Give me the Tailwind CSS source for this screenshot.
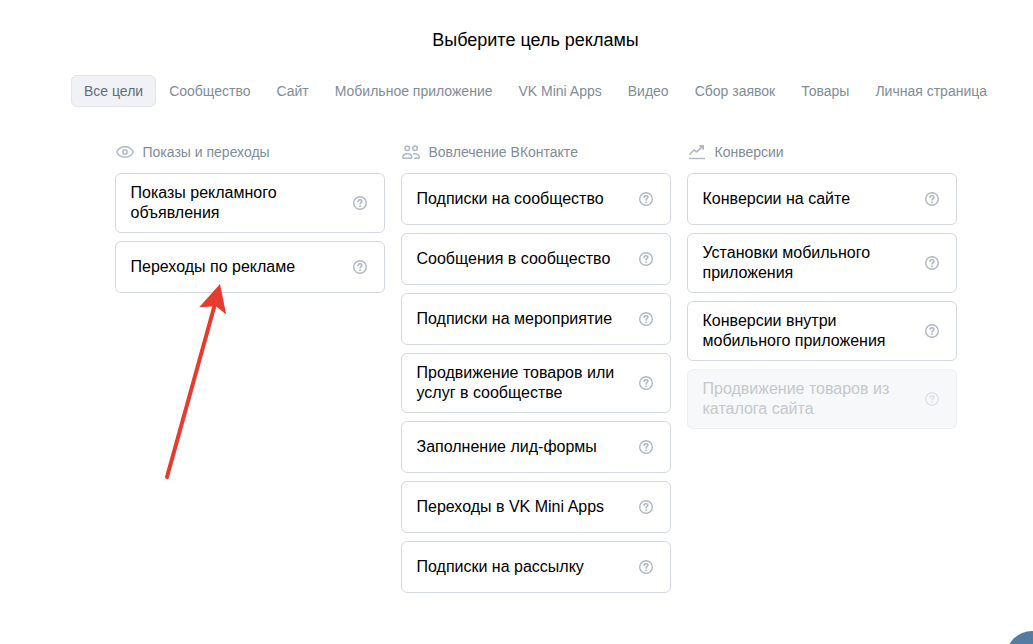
<!DOCTYPE html>
<html lang="ru">
<head>
  <meta charset="UTF-8" />
  <meta name="viewport" content="width=device-width, initial-scale=1" />
  <title>Выберите цель рекламы</title>
  <script src="https://cdn.jsdelivr.net/npm/@tailwindcss/browser@4"></script>
  <style>
    body {
      font-family: 'Liberation Sans', Arial, sans-serif;
    }
  </style>
</head>
<body class="bg-white text-black">
  <svg class="hidden" aria-hidden="true">
    <symbol id="help" viewBox="0 0 14 14">
      <circle cx="7" cy="7" r="6.3" fill="none" stroke="currentColor" stroke-width="1.4" />
      <path d="M5.1 5.5c0-1.1.8-1.8 1.9-1.8s1.9.7 1.9 1.6c0 1.3-1.8 1.3-1.8 2.7" fill="none" stroke="currentColor" stroke-width="1.5" stroke-linecap="round" />
      <circle cx="7.1" cy="10.2" r=".9" fill="currentColor" />
    </symbol>
  </svg>

  <main class="relative pl-[38px] pt-7 pb-12">
    <h1 class="text-center text-lg leading-6">Выберите цель рекламы</h1>

    <!-- Tabs -->
    <nav class="mt-[23px] flex justify-center text-sm whitespace-nowrap text-[#818c99]">
      <button class="h-8 px-3 rounded-md border border-[#e3e5e9] bg-[#f0f2f5] text-[#626d7a]">Все цели</button>
      <button class="h-8 px-3 border border-transparent">Сообщество</button>
      <button class="h-8 px-3 border border-transparent">Сайт</button>
      <button class="h-8 px-3 border border-transparent">Мобильное приложение</button>
      <button class="h-8 px-3 border border-transparent">VK Mini Apps</button>
      <button class="h-8 px-3 border border-transparent">Видео</button>
      <button class="h-8 px-3 border border-transparent">Сбор заявок</button>
      <button class="h-8 px-3 border border-transparent">Товары</button>
      <button class="h-8 px-3 border border-transparent">Личная страница</button>
    </nav>

    <!-- Goals -->
    <div class="mt-[34px] flex justify-center items-start gap-4">
      <section class="w-[270px] flex flex-col gap-2">
        <h2 class="mb-0.5 flex items-center gap-2 h-[22px] text-sm text-[#818c99]">
          <svg class="w-5 h-5 text-[#aeb7c2]" viewBox="0 0 20 20" fill="none" stroke="currentColor" stroke-width="1.5">
            <path d="M1.7 10C3.3 6.6 6.4 4.8 10 4.8S16.7 6.6 18.3 10C16.7 13.4 13.6 15.2 10 15.2S3.3 13.4 1.7 10z" stroke-linejoin="round" />
            <circle cx="10" cy="10" r="2.2" />
          </svg>
          Показы и переходы
        </h2>
        <button class="min-h-[52px] py-[9px] pl-[15px] pr-[17px] flex items-center justify-between gap-6 rounded-md border border-[#d3d9de] text-left text-base leading-5">
          Показы рекламного объявления
          <svg class="w-[14px] h-[14px] shrink-0 text-[#aeb7c2]"><use href="#help" /></svg>
        </button>
        <button class="min-h-[52px] py-[9px] pl-[15px] pr-[17px] flex items-center justify-between gap-6 rounded-md border border-[#d3d9de] text-left text-base leading-5">
          Переходы по рекламе
          <svg class="w-[14px] h-[14px] shrink-0 text-[#aeb7c2]"><use href="#help" /></svg>
        </button>
      </section>

      <section class="w-[270px] flex flex-col gap-2">
        <h2 class="mb-0.5 flex items-center gap-2 h-[22px] text-sm text-[#818c99]">
          <svg class="w-5 h-5 text-[#aeb7c2]" viewBox="0 0 20 20" fill="none" stroke="currentColor" stroke-width="1.5" stroke-linejoin="round" stroke-linecap="round">
            <circle cx="6.3" cy="6.2" r="2.3" />
            <circle cx="14" cy="6.2" r="2.3" />
            <path d="M1.8 15.2c0-2.200 1.900-3.500 4.500-3.500s4.500 1.300 4.500 3.500c0 .700-.400 1-1 1H2.800c-.600 0-1-.300-1-1z" />
            <path d="M12.700 11.800c3-.500 5.700.900 5.700 3.400 0 .700-.400 1-1 1h-3.800" />
          </svg>
          Вовлечение ВКонтакте
        </h2>
        <button class="min-h-[52px] py-[9px] pl-[15px] pr-[17px] flex items-center justify-between gap-6 rounded-md border border-[#d3d9de] text-left text-base leading-5">
          Подписки на сообщество
          <svg class="w-[14px] h-[14px] shrink-0 text-[#aeb7c2]"><use href="#help" /></svg>
        </button>
        <button class="min-h-[52px] py-[9px] pl-[15px] pr-[17px] flex items-center justify-between gap-6 rounded-md border border-[#d3d9de] text-left text-base leading-5">
          Сообщения в сообщество
          <svg class="w-[14px] h-[14px] shrink-0 text-[#aeb7c2]"><use href="#help" /></svg>
        </button>
        <button class="min-h-[52px] py-[9px] pl-[15px] pr-[17px] flex items-center justify-between gap-6 rounded-md border border-[#d3d9de] text-left text-base leading-5">
          Подписки на мероприятие
          <svg class="w-[14px] h-[14px] shrink-0 text-[#aeb7c2]"><use href="#help" /></svg>
        </button>
        <button class="min-h-[52px] py-[9px] pl-[15px] pr-[17px] flex items-center justify-between gap-6 rounded-md border border-[#d3d9de] text-left text-base leading-5">
          Продвижение товаров или услуг в сообществе
          <svg class="w-[14px] h-[14px] shrink-0 text-[#aeb7c2]"><use href="#help" /></svg>
        </button>
        <button class="min-h-[52px] py-[9px] pl-[15px] pr-[17px] flex items-center justify-between gap-6 rounded-md border border-[#d3d9de] text-left text-base leading-5">
          Заполнение лид-формы
          <svg class="w-[14px] h-[14px] shrink-0 text-[#aeb7c2]"><use href="#help" /></svg>
        </button>
        <button class="min-h-[52px] py-[9px] pl-[15px] pr-[17px] flex items-center justify-between gap-6 rounded-md border border-[#d3d9de] text-left text-base leading-5">
          Переходы в VK Mini Apps
          <svg class="w-[14px] h-[14px] shrink-0 text-[#aeb7c2]"><use href="#help" /></svg>
        </button>
        <button class="min-h-[52px] py-[9px] pl-[15px] pr-[17px] flex items-center justify-between gap-6 rounded-md border border-[#d3d9de] text-left text-base leading-5">
          Подписки на рассылку
          <svg class="w-[14px] h-[14px] shrink-0 text-[#aeb7c2]"><use href="#help" /></svg>
        </button>
      </section>

      <section class="w-[270px] flex flex-col gap-2">
        <h2 class="mb-0.5 flex items-center gap-2 h-[22px] text-sm text-[#818c99]">
          <svg class="w-5 h-5 text-[#aeb7c2]" viewBox="0 0 20 20" fill="none" stroke="currentColor" stroke-width="1.6" stroke-linejoin="round">
            <path d="M2.8 12.2L7 8l2.600 1.800L15.300 4.600" stroke-linecap="round" />
            <path d="M12.300 3.600h4.200v4.200z" fill="currentColor" stroke-width="1" />
            <path d="M2 16.500h16" stroke-width="1.400" />
          </svg>
          Конверсии
        </h2>
        <button class="min-h-[52px] py-[9px] pl-[15px] pr-[17px] flex items-center justify-between gap-6 rounded-md border border-[#d3d9de] text-left text-base leading-5">
          Конверсии на сайте
          <svg class="w-[14px] h-[14px] shrink-0 text-[#aeb7c2]"><use href="#help" /></svg>
        </button>
        <button class="min-h-[52px] py-[9px] pl-[15px] pr-[17px] flex items-center justify-between gap-6 rounded-md border border-[#d3d9de] text-left text-base leading-5">
          Установки мобильного приложения
          <svg class="w-[14px] h-[14px] shrink-0 text-[#aeb7c2]"><use href="#help" /></svg>
        </button>
        <button class="min-h-[52px] py-[9px] pl-[15px] pr-[17px] flex items-center justify-between gap-6 rounded-md border border-[#d3d9de] text-left text-base leading-5">
          Конверсии внутри мобильного приложения
          <svg class="w-[14px] h-[14px] shrink-0 text-[#aeb7c2]"><use href="#help" /></svg>
        </button>
        <button disabled class="min-h-[52px] py-[9px] pl-[15px] pr-[17px] flex items-center justify-between gap-6 rounded-md border border-[#edeef0] bg-[#f7f8fa] text-left text-base leading-5 text-[#c4c8cc]">
          Продвижение товаров из каталога сайта
          <svg class="w-[14px] h-[14px] shrink-0 text-[#dfe2e6]"><use href="#help" /></svg>
        </button>
      </section>
    </div>

    <!-- Pointer to the selected goal -->
    <svg class="absolute left-[160px] top-[280px] w-[70px] h-[204px] pointer-events-none" viewBox="160 280 70 204" aria-hidden="true">
      <path d="M167 477L215 304" stroke="#e63b2e" stroke-width="4" stroke-linecap="round" />
      <path d="M220 284L226.200 314.500L216 306.200L199.200 307.200z" fill="#e63b2e" />
    </svg>
  </main>

  <!-- Chat bubble, mostly off screen -->
  <button aria-label="Чат" class="fixed -right-[25px] -bottom-[39px] w-[52px] h-[52px] rounded-full bg-[#577ca3]"></button>
</body>
</html>
